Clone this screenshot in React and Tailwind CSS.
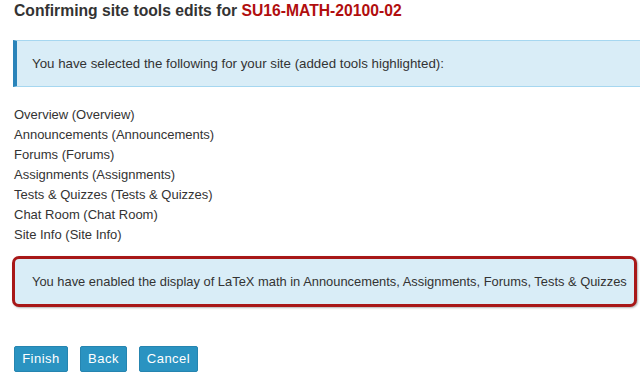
import React from 'react';

const tools = [
  'Overview (Overview)',
  'Announcements (Announcements)',
  'Forums (Forums)',
  'Assignments (Assignments)',
  'Tests & Quizzes (Tests & Quizzes)',
  'Chat Room (Chat Room)',
  'Site Info (Site Info)',
];

export default function App() {
  return (
    <div className="w-[640px] h-[382px] bg-white overflow-hidden text-[#333] font-['Liberation_Sans',Arial,sans-serif]">
      <h1 className="pl-[14px] pt-[1px] text-[15.7px] leading-[20px] font-bold text-[#333]">
        Confirming site tools edits for <span className="text-[#b10e0e]">SU16-MATH-20100-02</span>
      </h1>

      <div className="ml-[13px] mt-[19px] -mr-[4px] h-[47px] flex items-center bg-[#d9edf7] border-y border-[#a6d7f0] border-l-[4px] border-l-[#2a84ba] pl-[15px] text-[13.3px]">
        You have selected the following for your site (added tools highlighted):
      </div>

      <ul className="mt-[18px] pl-[14px] text-[13px] leading-[20px]">
        {tools.map(t => (
          <li key={t}>{t}</li>
        ))}
      </ul>

      <div className="ml-[12px] mr-[3px] mt-[11px] h-[51px] rounded-[7px] border-[3px] border-[#a81818] bg-[#d9edf7] flex items-center pl-[17px] text-[12.9px] whitespace-nowrap shadow-[1px_1px_2px_rgba(0,0,0,0.3)]">
        You have enabled the display of LaTeX math in Announcements, Assignments, Forums, Tests &amp; Quizzes
      </div>

      <div className="flex gap-[12px] pl-[14px] mt-[39px]">
        <button className="h-[26px] w-[54px] rounded-[2px] bg-[#2a93c1] border border-[#2685b0] text-white text-[13px] tracking-[0.5px]">Finish</button>
        <button className="h-[26px] w-[47px] rounded-[2px] bg-[#2a93c1] border border-[#2685b0] text-white text-[13px] tracking-[0.5px]">Back</button>
        <button className="h-[26px] w-[59px] rounded-[2px] bg-[#2a93c1] border border-[#2685b0] text-white text-[13px] tracking-[0.5px]">Cancel</button>
      </div>
    </div>
  );
}
